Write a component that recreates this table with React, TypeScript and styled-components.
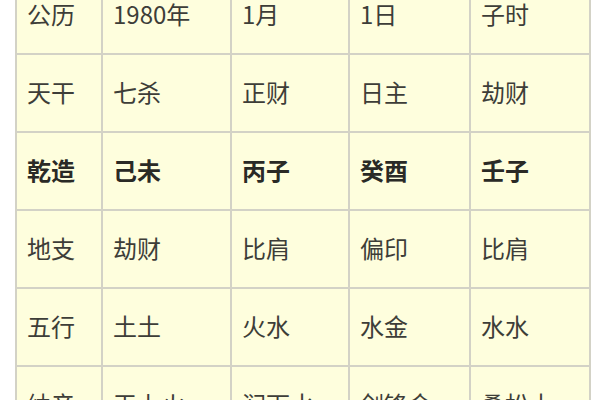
import React from 'react';
import styled, { createGlobalStyle } from 'styled-components';

const GlobalStyle = createGlobalStyle`
  html, body {
    margin: 0;
    padding: 0;
    background: #ffffff;
    overflow: hidden;
  }
`;

const Page = styled.div`
  width: 600px;
  height: 400px;
  overflow: hidden;
  padding-left: 15px;
  box-sizing: border-box;
`;

const Table = styled.table`
  margin-top: -25px;
  border-collapse: collapse;
  table-layout: fixed;
  width: 576px;
  background: #fefedd;
  font-family: 'Noto Sans CJK SC', 'Noto Sans', sans-serif;
  color: #3a3a36;
`;

const Cell = styled.td<{ $bold?: boolean }>`
  border: 2px solid #d3d2c6;
  height: 74px;
  padding: 0 0 2px 10px;
  font-size: 24px;
  line-height: 1.2;
  font-weight: ${(p) => (p.$bold ? 700 : 400)};
  color: ${(p) => (p.$bold ? '#2a2a26' : '#3d3d38')};
  vertical-align: middle;
  white-space: nowrap;
  overflow: hidden;
`;

const widths = [86, 129, 118, 121, 120];

const rows: { cells: string[]; bold?: boolean }[] = [
  { cells: ['公历', '1980年', '1月', '1日', '子时'] },
  { cells: ['天干', '七杀', '正财', '日主', '劫财'] },
  { cells: ['乾造', '己未', '丙子', '癸酉', '壬子'], bold: true },
  { cells: ['地支', '劫财', '比肩', '偏印', '比肩'] },
  { cells: ['五行', '土土', '火水', '水金', '水水'] },
  { cells: ['纳音', '天上火', '涧下水', '剑锋金', '桑松木'] },
];

const App = () => {
  return (
    <>
      <GlobalStyle />
      <Page>
        <Table>
          <colgroup>
            {widths.map((w, i) => (
              <col key={i} style={{ width: w }} />
            ))}
          </colgroup>
          <tbody>
            {rows.map((row, r) => (
              <tr key={r}>
                {row.cells.map((c, i) => (
                  <Cell key={i} $bold={row.bold}>
                    {c}
                  </Cell>
                ))}
              </tr>
            ))}
          </tbody>
        </Table>
      </Page>
    </>
  );
};

export default App;
